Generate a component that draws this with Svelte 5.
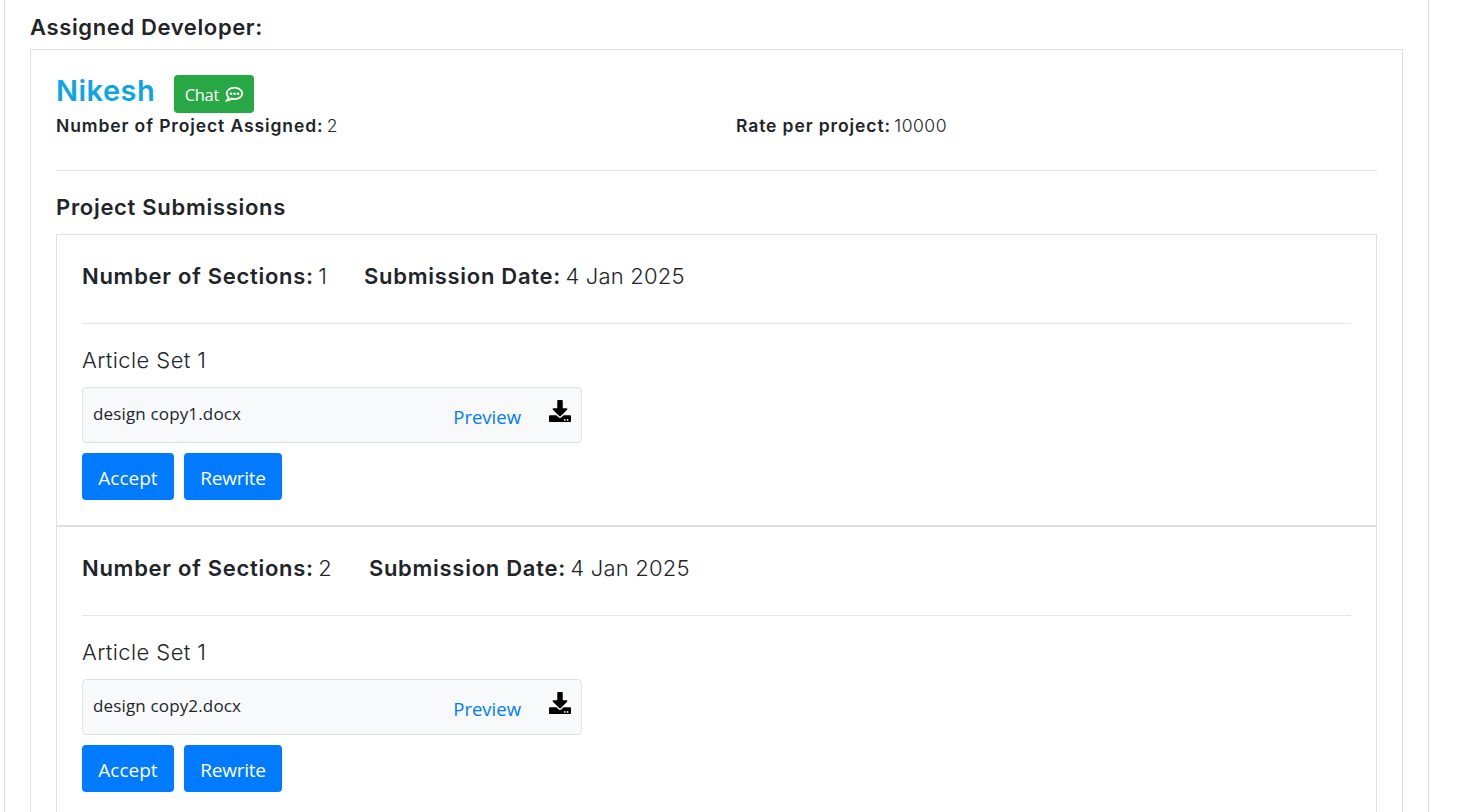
<script lang="ts">
	const submissions = [
		{ sections: 1, date: '4 Jan 2025', file: 'design copy1.docx' },
		{ sections: 2, date: '4 Jan 2025', file: 'design copy2.docx' }
	];
</script>

<div class="page">
	<h5 class="page-title">Assigned Developer:</h5>
	<div class="dev-card">
		<div class="dev-head">
			<h3 class="dev-name">Nikesh</h3>
			<button class="btn btn-chat">
				Chat
				<svg class="chat-icon" viewBox="0 0 20 20" width="19" height="19" aria-hidden="true">
					<path
						d="M10 2.8c-4.6 0-8.2 2.7-8.2 6.2 0 1.6.8 3 2 4.100-.3 1.300-1 2.400-1.800 3.200 1.900-.2 3.700-1 5-2 1 .3 2 .5 3 .5 4.600 0 8.200-2.700 8.200-5.800S14.600 2.800 10 2.800z"
						fill="none"
						stroke="#fff"
						stroke-width="1.900"
					/>
					<circle cx="6.300" cy="9.200" r="1.400" fill="#fff" />
					<circle cx="10" cy="9.200" r="1.400" fill="#fff" />
					<circle cx="13.700" cy="9.200" r="1.400" fill="#fff" />
				</svg>
			</button>
		</div>
		<div class="dev-meta">
			<p><strong>Number of Project Assigned:</strong> 2</p>
			<p><strong>Rate per project:</strong> 10000</p>
		</div>
		<hr class="rule" />
		<h5 class="sub-title">Project Submissions</h5>
		<div class="sub-list">
			{#each submissions as item}
				<section class="sub-item">
					<div class="sub-info">
						<span><strong>Number of Sections:</strong> {item.sections}</span>
						<span><strong>Submission Date:</strong> {item.date}</span>
					</div>
					<hr class="rule" />
					<h5 class="set-title">Article Set 1</h5>
					<div class="file-row">
						<span class="file-name">{item.file}</span>
						<a class="preview" href="#preview">Preview</a>
						<svg class="download" viewBox="0 0 512 512" width="22" height="22" aria-hidden="true">
							<path
								d="M216 0h80c13 0 24 11 24 24v168h88c18 0 27 22 14 34L270 378c-8 8-20 8-28 0L90 226c-13-12-4-34 14-34h88V24c0-13 11-24 24-24zm296 376v112c0 13-11 24-24 24H24c-13 0-24-11-24-24V376c0-13 11-24 24-24h147l49 49c20 20 52 20 72 0l49-49h147c13 0 24 11 24 24zm-124 88a20 20 0 1 0-40 0 20 20 0 0 0 40 0zm64 0a20 20 0 1 0-40 0 20 20 0 0 0 40 0z"
								fill="#000"
							/>
						</svg>
					</div>
					<div class="actions">
						<button class="btn btn-primary btn-accept">Accept</button>
						<button class="btn btn-primary btn-rewrite">Rewrite</button>
					</div>
				</section>
			{/each}
		</div>
	</div>
</div>

<style>
	:global(body) {
		background: #fff;
		overflow: hidden;
	}

	.page {
		box-sizing: border-box;
		width: 1425px;
		height: 812px;
		margin-left: 4px;
		padding: 0 25px;
		border-left: 1px solid #dfdfdf;
		border-right: 1px solid #dfdfdf;
		overflow: hidden;
		font-family: Inter, sans-serif;
		font-weight: 300;
		color: #212529;
	}

	.page-title {
		margin: 0;
		padding-top: 14px;
		height: 49px;
		box-sizing: border-box;
		font-size: 22px;
		line-height: 26px;
		font-weight: 600;
		letter-spacing: 0.63px;
	}

	.dev-card {
		width: 1373px;
		box-sizing: border-box;
		border: 1px solid #dfdfdf;
		padding: 25px;
	}

	.dev-head {
		display: flex;
		align-items: center;
		gap: 19px;
		height: 38px;
	}

	.dev-name {
		margin: -7px 0 0;
		font-size: 29px;
		font-weight: 600;
		letter-spacing: 0.5px;
		color: #0ea5e2;
	}

	.btn {
		border: 0;
		color: #fff;
		font-family: 'Open Sans', sans-serif;
		border-radius: 4px;
	}

	.btn-chat {
		display: flex;
		align-items: center;
		justify-content: center;
		gap: 6px;
		width: 80px;
		height: 38px;
		padding: 0;
		background: #28a745;
		font-size: 16.500px;
		font-weight: 400;
		letter-spacing: -0.3px;
	}

	.dev-meta {
		display: grid;
		grid-template-columns: 680px 1fr;
		height: 33px;
		font-size: 17.500px;
		line-height: 26px;
		letter-spacing: 0.5px;
	}

	.dev-meta strong {
		letter-spacing: 0.890px;
		margin-right: -2px;
	}

	.dev-meta p {
		margin: 0;
	}

	strong {
		font-weight: 600;
	}

	.rule {
		margin: 0;
		border: 0;
		border-top: 1px solid #e4e4e4;
	}

	.dev-card > .rule {
		margin-top: 24px;
	}

	.sub-title {
		margin: 0;
		padding-top: 23px;
		height: 63px;
		box-sizing: border-box;
		font-size: 22px;
		line-height: 26px;
		font-weight: 600;
		letter-spacing: 0.7px;
	}

	.sub-list {
		border: 1px solid #dfdfdf;
	}

	.sub-item {
		padding: 25px;
	}

	.sub-item + .sub-item {
		border-top: 2px solid #dfdfdf;
	}

	.sub-info {
		display: flex;
		gap: 37px;
		height: 63px;
		padding-top: 2px;
		box-sizing: border-box;
		font-size: 22px;
		line-height: 28px;
		letter-spacing: 0.2px;
	}

	.sub-info strong {
		letter-spacing: 0.720px;
		margin-right: -2px;
	}

	.set-title {
		margin: 0;
		padding-top: 22px;
		height: 63px;
		box-sizing: border-box;
		font-size: 22px;
		line-height: 28px;
		font-weight: 300;
		letter-spacing: 0.4px;
	}

	.file-row {
		display: flex;
		align-items: center;
		box-sizing: border-box;
		width: 500px;
		height: 56px;
		padding: 0 10px;
		background: #f8f9fa;
		border: 1px solid #dee2e6;
		border-radius: 4px;
	}

	.file-name {
		flex: 1;
		margin-top: -3px;
		font-family: 'Open Sans', sans-serif;
		font-weight: 400;
		font-size: 17px;
		letter-spacing: 0.15px;
	}

	.preview {
		margin: 2px 28px 0 0;
		color: #007bff;
		text-decoration: none;
		font-family: 'Open Sans', sans-serif;
		font-weight: 400;
		font-size: 18.500px;
	}

	.download {
		margin-top: -8px;
	}

	.actions {
		display: flex;
		gap: 10px;
		margin-top: 10px;
	}

	.btn-primary {
		height: 47px;
		padding: 2px 0 0;
		background: #007bff;
		font-size: 19px;
	}

	.btn-accept {
		width: 92px;
	}

	.btn-rewrite {
		width: 98px;
		letter-spacing: -0.25px;
	}
</style>
